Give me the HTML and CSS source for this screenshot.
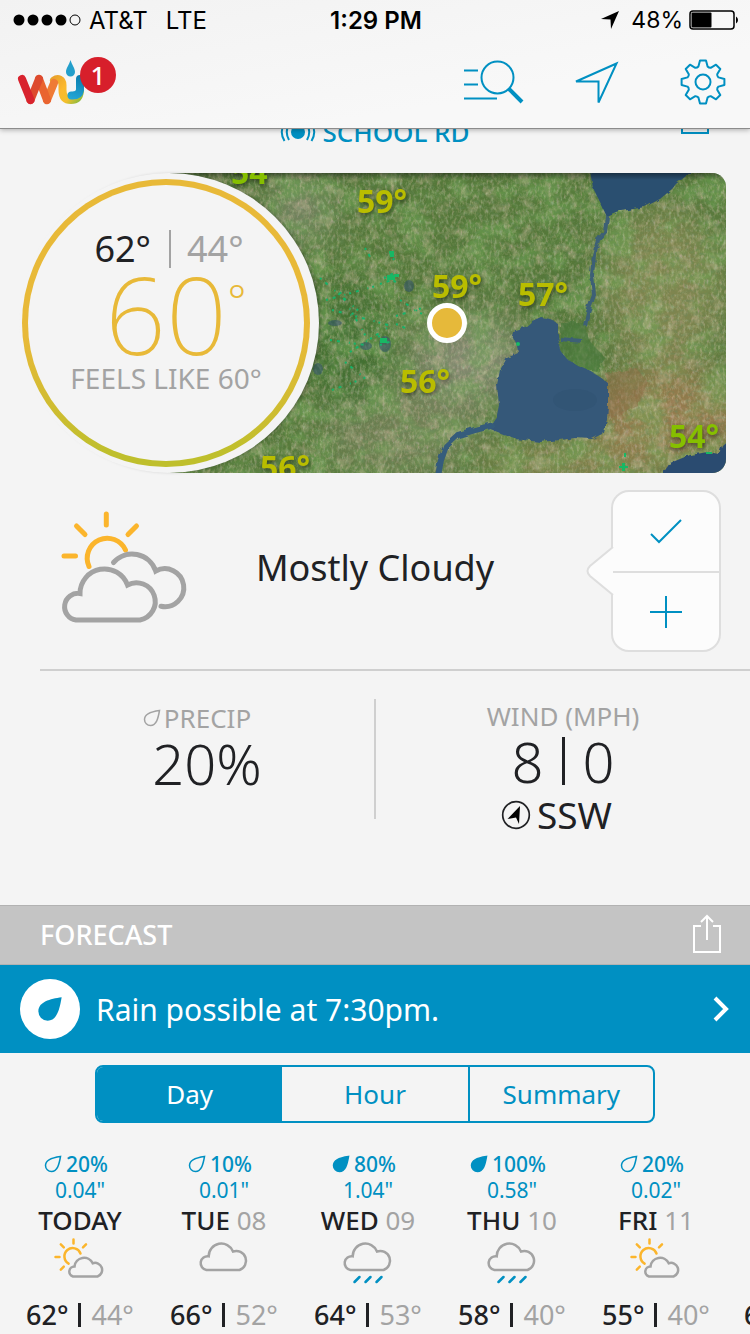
FILE: index.html
```html
<!DOCTYPE html>
<html lang="en">
<head>
<meta charset="utf-8">
<meta name="viewport" content="width=device-width, initial-scale=1">
<title>Weather</title>
<link rel="stylesheet" href="styles.css">
</head>
<body>
<svg class="symbols" aria-hidden="true">
  <symbol id="drop" viewBox="0 0 18 18"><path d="M16.5 1.5C9 2.500 1.500 4.500 1.500 10.500A6 6 0 0 0 7.500 16.500C13.500 16.500 15.200 9 16.500 1.500Z"/></symbol>
  <symbol id="partly" viewBox="0 0 52 48">
    <g class="sun"><path d="M14.600 25.600A8.300 8.300 0 1 1 26.500 15.500M19.500 1.500v4M6.800 6.300l3 3M32 6.300l-3 3M1.500 19h4M6.800 31.700l3-3"/></g>
    <path class="grey" d="M19 38.500A5.100 5.100 0 0 1 20.500 28.500A9.600 9.600 0 0 1 38.700 25.300A7 7 0 1 1 43.500 38.500Z"/>
  </symbol>
  <symbol id="overcast" viewBox="0 0 52 48"><path class="grey" d="M8.500 32A6.900 6.900 0 0 1 10.700 18.300A12.600 12.600 0 0 1 35 13.500A9.700 9.700 0 1 1 41.500 32Z"/></symbol>
  <symbol id="rain" viewBox="0 0 52 48">
    <use href="#overcast" width="52" height="48"/>
    <path class="drops" d="M12.500 44l5-5M23.500 44l5-5M34.500 44l5-5"/>
  </symbol>
  <symbol id="share" viewBox="0 0 30 40"><path d="M9 12H2V38H28V12H21M15 26V2M9 8L15 2L21 8"/></symbol>
</svg>

<header class="top">
  <div class="status">
    <div class="carrier">
      <svg width="68" height="12" viewBox="0 0 68 12"><g><circle cx="6" cy="6" r="5.500"/><circle cx="20" cy="6" r="5.500"/><circle cx="34" cy="6" r="5.500"/><circle cx="48" cy="6" r="5.500"/><circle cx="62" cy="6" r="5" fill="none" stroke="#000"/></g></svg>
      <span>AT&amp;T</span><span class="lte">LTE</span>
    </div>
    <time class="clock">1:29 PM</time>
    <div class="battery">
      <svg width="18" height="18" viewBox="0 0 18 18"><path d="M18 0L0 8L9.500 8.500L10 18Z"/></svg>
      <span>48%</span>
      <svg width="50" height="20" viewBox="0 0 50 20"><rect x="1" y="1" width="44" height="18" rx="3" fill="none" stroke="#000" stroke-width="1.500"/><rect x="2.500" y="2.500" width="20" height="15" rx="1"/><path d="M47 6.500q2 1 2 3.500t-2 3.500z"/></svg>
    </div>
  </div>
  <nav class="bar">
    <a class="logo" href="#" aria-label="Weather home">
      <svg width="68" height="50" viewBox="16 54 68 50" fill="none" stroke-width="8" stroke-linecap="round" stroke-linejoin="round">
        <defs>
          <linearGradient id="hook" x1="54" y1="74" x2="80" y2="98" gradientUnits="userSpaceOnUse"><stop offset="0" stop-color="#e9a22c"/><stop offset=".4" stop-color="#fcb92e"/><stop offset=".72" stop-color="#f3c02d"/><stop offset="1" stop-color="#8dbb3c"/></linearGradient>
          <linearGradient id="tube" x1="80" y1="72" x2="72" y2="96" gradientUnits="userSpaceOnUse"><stop offset="0" stop-color="#0a7cad"/><stop offset="1" stop-color="#23a6d6"/></linearGradient>
        </defs>
        <path d="M54 77.500C58 74.500 62.500 76.500 62.500 82V87Q62.500 97 71 97Q79 97 80 88" stroke="url(#hook)"/>
        <path d="M80 76V87Q79 93 71.500 92.500" stroke="url(#tube)"/>
        <path d="M47 97L54 80" stroke="#ef7b35"/>
        <path d="M39 76L47 97" stroke="#e96430"/>
        <path d="M30.500 97L39 76" stroke="#dd4a2e"/>
        <path d="M22 76L30.500 97" stroke="#d8232e"/>
        <path d="M70.500 57C69 62 66 65 66 69a4.500 4.500 0 0 0 9 0C75 65 72 62 70.500 57Z" fill="#239fcb"/>
      </svg>
      <span class="badge">1</span>
    </a>
    <button class="tool" aria-label="Search"><svg width="64" height="48" viewBox="463 58 64 48"><circle cx="497.500" cy="77.500" r="16"/><path d="M464 70.500h14M464 84.500h14M464 98.500h33"/><path d="M508.500 88.500L522 102" stroke-width="4"/></svg></button>
    <button class="tool" aria-label="Locate"><svg width="64" height="48" viewBox="568 58 64 48"><path d="M617.500 63.500L577 81.500H599.500V102.500Z"/></svg></button>
    <button class="tool" aria-label="Settings"><svg width="64" height="48" viewBox="-32 -24 64 48" stroke-linejoin="round"><circle r="7.500"/><path d="M-4.600-15.500L-3-21.400H3L4.600-15.500Q6-14 7.700-14.200L13-17.300L17.300-13L14.200-7.700Q14-6 15.500-4.600L21.400-3V3L15.500 4.600Q14 6 14.200 7.700L17.300 13L13 17.300L7.700 14.200Q6 14 4.600 15.500L3 21.400H-3L-4.600 15.500Q-6 14-7.700 14.200L-13 17.300L-17.300 13L-14.200 7.700Q-14 6-15.500 4.600L-21.400 3V-3L-15.500-4.600Q-14-6-14.200-7.700L-17.300-13L-13-17.300L-7.700-14.200Q-6-14-4.600-15.500Z"/></svg></button>
  </nav>
</header>

<main>
  <section class="station">
    <a class="place" href="#"><svg width="36" height="24" viewBox="0 0 36 24"><circle cx="18" cy="12" r="7" fill="#0090c2" stroke="none"/><path d="M9 4Q4.500 12 9 20M27 4Q31.500 12 27 20M4.500 3Q-1 12 4.500 21M31.500 3Q37 12 31.500 21"/></svg>SCHOOL RD</a>
    <button class="share" aria-label="Share"><svg width="30" height="40"><use href="#share"/></svg></button>
  </section>

  <section class="hero">
    <div class="dial"><div class="ring">
      <p class="hilo"><span>62°</span><span class="low">44°</span></p>
      <p class="now">60<sup>°</sup></p>
      <p class="feels">FEELS LIKE 60°</p>
    </div></div>
    <svg class="map" viewBox="168 173 558 300" preserveAspectRatio="xMidYMid slice" role="img" aria-label="Temperature map">
      <defs>
        <filter id="soft" x="-50%" y="-50%" width="200%" height="200%"><feGaussianBlur stdDeviation="18"/></filter>
        <filter id="coarse" x="0" y="0" width="100%" height="100%"><feTurbulence type="fractalNoise" baseFrequency=".03 .045" numOctaves="5" seed="4"/><feColorMatrix values="0 0 0 0 .17  0 0 0 0 .4  0 0 0 0 .1  3.600 0 0 0 -1.500"/></filter>
        <filter id="tan" x="0" y="0" width="100%" height="100%"><feTurbulence type="fractalNoise" baseFrequency=".09 .07" numOctaves="4" seed="14"/><feColorMatrix values="0 0 0 0 .62  0 0 0 0 .5  0 0 0 0 .36  0 4 0 0 -2.100"/></filter>
        <filter id="fine" x="0" y="0" width="100%" height="100%"><feTurbulence type="fractalNoise" baseFrequency=".35 .2" numOctaves="3" seed="9"/><feColorMatrix values=".6 0 0 0 .34  0 .5 0 0 .32  0 0 .4 0 .14  0 0 2.400 0 -1"/></filter>
        <filter id="dark" x="0" y="0" width="100%" height="100%"><feTurbulence type="fractalNoise" baseFrequency=".2 .3" numOctaves="2" seed="21"/><feColorMatrix values="0 0 0 0 .14  0 0 0 0 .26  0 0 0 0 .12  0 2.400 0 0 -1.100"/></filter>
        <filter id="rough" x="-5%" y="-5%" width="110%" height="110%"><feTurbulence type="fractalNoise" baseFrequency=".12" numOctaves="2" seed="2"/><feDisplacementMap in="SourceGraphic" scale="5"/></filter>
        <linearGradient id="shade" x1="0" y1="0" x2="0" y2="1"><stop offset="0" stop-color="#000" stop-opacity=".4"/><stop offset="1" stop-color="#000" stop-opacity="0"/></linearGradient>
      </defs>
      <rect x="168" y="173" width="558" height="300" fill="#55783a"/>
      <g filter="url(#soft)">
        <ellipse cx="470" cy="360" rx="58" ry="40" fill="#838870"/>
        <ellipse cx="400" cy="430" rx="80" ry="45" fill="#718055"/>
        <ellipse cx="670" cy="420" rx="80" ry="50" fill="#957a4e"/>
        <ellipse cx="570" cy="465" rx="90" ry="20" fill="#8a8450"/>
        <ellipse cx="665" cy="290" rx="60" ry="80" fill="#7f8550"/>
        <ellipse cx="300" cy="210" rx="30" ry="30" fill="#7c8669"/>
        <ellipse cx="350" cy="350" rx="40" ry="70" fill="#427031"/>
      </g>
      <rect x="168" y="173" width="558" height="300" filter="url(#coarse)" opacity=".5"/>
      <rect x="168" y="173" width="558" height="300" filter="url(#tan)" opacity=".35"/>
      <rect x="168" y="173" width="558" height="300" filter="url(#dark)" opacity=".45"/>
      <rect x="168" y="173" width="558" height="300" filter="url(#fine)" opacity=".4"/>
      <g filter="url(#rough)">
        <path d="M560 322h25l4 18 16 18-8 14-22-4-15-18z" fill="#47763a" opacity=".65"/>
        <path d="M606 374l30-6 12 14-10 24-26 12-6-4z" fill="#8f6a48" opacity=".45"/>
        <g fill="#345879">
          <path d="M589 165L593 188L600 202L607 217L622 211L645 207L660 199L672 189L676 184L700 165Z" fill="#2c4f70"/>
          <path d="M541 317L550 319L558 324L558 335L560 350L567 359L578 366L590 371L600 377L608 383V405L607 420L602 434L592 439L575 438L560 440L540 442L515 439L500 433L488 428L497 415L499 405L497 385L500 370L507 358L518 353L517 345L513 337L515 330L525 327L532 321Z"/>
          <path d="M661 476L670 463L690 455L708 452L719 454L722 445L732 436V480H661Z" fill="#2b4c70"/>
        </g>
        <path d="M607 216L605 232L598 240L594 255L592 275L594 295L588 312L585 326M560 339L582 341" fill="none" stroke="#3d6076" stroke-width="4"/>
        <path d="M494 425L475 430L458 435L446 446L441 460L438 476" fill="none" stroke="#365b7b" stroke-width="6"/>
      </g>
      <ellipse cx="575" cy="400" rx="22" ry="11" fill="#2a4b6c" opacity=".25"/>
      <g fill="#2f5068" opacity=".55"><ellipse cx="335" cy="323" rx="7" ry="3"/><ellipse cx="385" cy="344" rx="6" ry="8"/><ellipse cx="366" cy="346" rx="6" ry="4"/><ellipse cx="409" cy="286" rx="5" ry="6"/><ellipse cx="318" cy="369" rx="5" ry="6"/></g>
      <g fill="none" stroke="#16b26a" stroke-width="2" stroke-dasharray="2 5 3 9 1 4">
        <path d="M365 248l8 14M390 252l4 8M384 278l16-8M380 284l18-6M388 276l10 8M320 278l40 34M326 300l50-14M332 310l60 16M340 292l28 48M400 300l22 14M396 316l26-8M396 324l14 6M350 352l40-26M330 340l42 6M345 362l22 18M332 390l28-10M380 345l12-4M378 336l14 8"/>
      </g>
      <g fill="#18b864"><path d="M389 251h5v6h-4zM387 275h8v5h-8zM394 274h5v3h-5zM380 338h7v5h-7zM622 463h3v3h3v2h-3v3h-3v-3h-3v-2h3zM624 453h2v4h-2zM706 452h6v2h-6z"/><circle cx="518" cy="344" r="2"/></g>
      <rect x="168" y="173" width="558" height="7" fill="url(#shade)"/>
      <g class="temps-on-map">
        <text class="cool" x="231" y="184">54°</text><text x="357" y="213">59°</text><text x="432" y="298">59°</text><text x="518" y="306">57°</text><text x="400" y="393">56°</text><text class="cool" x="669" y="448">54°</text><text x="260" y="479">56°</text>
      </g>
      <circle cx="447" cy="323" r="17.500" fill="#e6b93a" stroke="#fff" stroke-width="5"/>
    </svg>
  </section>

  <section class="condition">
    <svg class="condition-icon" width="128" height="116" viewBox="60 509 128 116">
      <path class="sun" d="M89 566.500A20 20 0 1 1 125.500 550M106.300 514v11M76.500 526l8.500 8.500M136.500 526l-8.500 8.500M64 556h11.500"/>
      <path class="grey" d="M113.500 562.500A24.800 24.800 0 0 1 155.700 571A19 19 0 1 1 161 606.300M76 620A13.400 13.400 0 0 1 80 593.500A24.500 24.500 0 0 1 127.500 585A18.800 18.800 0 1 1 140 620Z"/>
    </svg>
    <h1>Mostly Cloudy</h1>
    <div class="report">
      <svg class="pointer" width="28" height="52" viewBox="0 0 28 52"><path d="M27 2L4 21Q-1 26 4 31L27 50" fill="#fcfcfc" stroke="#dedede" stroke-width="2"/></svg>
      <button aria-label="Confirm conditions"><svg width="32" height="26"><path d="M1 15L9 23L31 1"/></svg></button>
      <button aria-label="Report conditions"><svg width="32" height="32"><path d="M0 16H32M16 0V32"/></svg></button>
    </div>
  </section>

  <section class="metrics">
    <div class="metric precip">
      <h2><svg width="18" height="18"><use href="#drop"/></svg>PRECIP</h2>
      <p class="value">20%</p>
    </div>
    <div class="divider"></div>
    <div class="metric">
      <h2>WIND (MPH)</h2>
      <p class="value">8<i></i>0</p>
      <p class="direction"><svg width="30" height="30" viewBox="0 0 30 30"><circle cx="15" cy="15" r="13.300" fill="none" stroke="#202124" stroke-width="1.700"/><path d="M19 6L6.500 19L15 17.500L18 24Z"/></svg>SSW</p>
    </div>
  </section>

  <section class="forecast">
    <div class="forecast-head"><h2>FORECAST</h2><button class="share" aria-label="Share forecast"><svg width="30" height="40"><use href="#share"/></svg></button></div>
    <a class="alert" href="#">
      <span class="disc"><svg width="28" height="28"><use href="#drop"/></svg></span>
      <span class="message">Rain possible at 7:30pm.</span>
      <svg width="16" height="26" viewBox="0 0 16 26"><path d="M2 2L13 13L2 24" fill="none" stroke="#fff" stroke-width="4"/></svg>
    </a>
    <div class="tabs"><button class="active" aria-pressed="true">Day</button><button>Hour</button><button>Summary</button></div>
    <ol class="days">
      <li><p class="chance"><svg width="18" height="18"><use href="#drop"/></svg>20%</p><p class="amount">0.04"</p><h3>TODAY</h3><svg class="sky" width="52" height="48"><use href="#partly"/></svg><p class="range">62°<i></i><span>44°</span></p></li>
      <li><p class="chance"><svg width="18" height="18"><use href="#drop"/></svg>10%</p><p class="amount">0.01"</p><h3>TUE <span>08</span></h3><svg class="sky" width="52" height="48"><use href="#overcast"/></svg><p class="range">66°<i></i><span>52°</span></p></li>
      <li><p class="chance wet"><svg width="18" height="18"><use href="#drop"/></svg>80%</p><p class="amount">1.04"</p><h3>WED <span>09</span></h3><svg class="sky" width="52" height="48"><use href="#rain"/></svg><p class="range">64°<i></i><span>53°</span></p></li>
      <li><p class="chance wet"><svg width="18" height="18"><use href="#drop"/></svg>100%</p><p class="amount">0.58"</p><h3>THU <span>10</span></h3><svg class="sky" width="52" height="48"><use href="#rain"/></svg><p class="range">58°<i></i><span>40°</span></p></li>
      <li><p class="chance"><svg width="18" height="18"><use href="#drop"/></svg>20%</p><p class="amount">0.02"</p><h3>FRI <span>11</span></h3><svg class="sky" width="52" height="48"><use href="#partly"/></svg><p class="range">55°<i></i><span>40°</span></p></li>
      <li class="next"><p class="range">6</p></li>
    </ol>
  </section>
</main>
</body>
</html>
```
FILE: styles.css
```css
:root { --blue: #0090c2; --grey: #a3a3a3; --ink: #202124; --paper: #f4f4f4; }
* { box-sizing: border-box; }
body { margin: 0; background: var(--paper); color: var(--ink); font-family: "Noto Sans", "Open Sans", sans-serif; overflow-x: hidden; }
h1, h2, h3, p, ol { margin: 0; padding: 0; font-weight: 400; }
button { margin: 0; padding: 0; border: 0; background: none; font: inherit; color: inherit; }
a { color: inherit; text-decoration: none; }
svg { display: block; flex: none; }
.symbols { position: absolute; width: 0; height: 0; }
.sun { fill: none; stroke: #fbb52c; }
.grey { fill: none; stroke: var(--grey); }
.drops { fill: none; stroke: var(--blue); }

.top { position: sticky; top: 0; z-index: 5; background: linear-gradient(170deg, #f2f2f2, #f8f8f8 70%); border-bottom: 1px solid #8c8c8c; box-shadow: 0 1px 5px rgba(0, 0, 0, .3); }
.status { display: grid; grid-template-columns: 1fr auto 1fr; align-items: center; height: 40px; padding: 0 11px 0 13px; font-family: Inter, "Liberation Sans", sans-serif; font-size: 24px; color: #000; }
.carrier, .battery { display: flex; align-items: center; gap: 8px; }
.lte { margin-left: 10px; }
.clock { font-weight: 600; }
.battery { justify-content: flex-end; gap: 6px; }
.battery span { margin-left: 6px; font-size: 23px; }
.bar { display: flex; align-items: center; gap: 40px; height: 88px; padding: 0 15px 4px 16px; }
.logo { display: flex; align-items: flex-start; margin-right: auto; }
.badge { width: 36px; height: 36px; margin-left: -4px; z-index: 1; border-radius: 50%; background: #d71f2b; color: #fff; font-size: 26px; font-weight: 500; line-height: 36px; text-align: center; }
.tool svg { fill: none; stroke: var(--blue); stroke-width: 2; }

.station { display: grid; grid-template-columns: 1fr auto; align-items: end; margin-top: -34px; height: 78px; padding: 0 40px 26px; color: var(--blue); }
.place { display: flex; justify-content: center; align-items: center; gap: 6px; height: 36px; padding-left: 30px; font-size: 26px; font-weight: 500; }
.place svg, .share svg { fill: none; stroke: currentColor; stroke-width: 2; }
.station .share { padding-bottom: 15px; }

.hero { display: grid; padding: 0 24px 0 19px; }
.dial { grid-area: 1 / 1; z-index: 1; width: 300px; height: 300px; padding: 6px 3px; border-radius: 50%; background: var(--paper); box-shadow: 3px 0 4px -2px rgba(0, 0, 0, .4); }
.ring { height: 288px; width: 288px; padding-top: 45px; border: 6px solid transparent; border-radius: 50%; background: linear-gradient(var(--paper), var(--paper)) padding-box, linear-gradient(#e8b938 55%, #bfbf2c 95%) border-box; text-align: center; }
.hilo { display: grid; grid-template-columns: 1fr 1fr; padding-left: 6px; font-size: 36px; line-height: 38px; }
.hilo span { padding-right: 18px; text-align: right; }
.hilo .low { padding: 0 0 0 16px; border-left: 2px solid var(--grey); color: var(--grey); text-align: left; }
.now { padding-left: 20px; color: #e8b938; font-size: 107px; font-weight: 200; line-height: 92px; }
.now sup { display: inline-block; width: 20px; font-size: 44px; font-weight: 300; line-height: 44px; vertical-align: 38px; }
.feels { color: var(--grey); font-size: 28px; line-height: 36px; }
.map { grid-area: 1 / 1; justify-self: stretch; width: calc(100% - 149px); height: 300px; margin-left: 149px; border-radius: 0 14px 14px 0; }
.temps-on-map { font-size: 32px; font-weight: 700; fill: #b9bd00; filter: drop-shadow(1px 2px 2px rgba(0, 0, 0, .5)); }
.temps-on-map .cool { fill: #86bf00; }

.condition { display: grid; grid-template-columns: 1fr auto 1fr; align-items: center; height: 198px; margin-left: 40px; padding: 0 29px 0 20px; border-bottom: 2px solid #cfcfcf; }
.condition-icon { margin-bottom: 8px; stroke-width: 5; stroke-linecap: round; }
.condition h1 { margin: 0 31px 8px 0; font-size: 36px; }
.report { position: relative; justify-self: end; display: grid; grid-template-rows: 1fr 1fr; width: 110px; height: 162px; border: 2px solid #dedede; border-radius: 18px; background: #fcfcfc; }
.report button { display: grid; place-items: center; }
.report button + button { border-top: 2px solid #dedede; }
.report button svg { fill: none; stroke: var(--blue); stroke-width: 2; }
.pointer { position: absolute; left: -27px; top: 53px; }

.metrics { display: grid; grid-template-columns: 1fr 2px 1fr; align-items: start; padding: 28px 0 66px; text-align: center; }
.divider { height: 120px; background: #cfcfcf; }
.metric { padding-top: 2px; }
.metric.precip { padding: 4px 0 0 40px; }
.metric h2 { display: flex; justify-content: center; align-items: center; gap: 3px; color: var(--grey); font-size: 26px; line-height: 30px; }
.precip h2 { padding-right: 20px; }
.precip h2 svg, .chance svg { fill: none; stroke: currentColor; stroke-width: 1.5; }
.value { display: flex; justify-content: center; align-items: center; font-size: 56px; font-weight: 300; line-height: 60px; }
.value i { width: 3px; height: 48px; margin: 0 18px; background: var(--ink); }
.direction { display: flex; justify-content: center; align-items: center; gap: 6px; padding-right: 13px; font-size: 37px; line-height: 48px; }

.forecast-head { display: flex; justify-content: space-between; align-items: center; height: 60px; padding: 0 28px 2px 40px; border: solid #b2b2b2; border-width: 1px 0; background: #c4c4c4; color: #fff; }
.forecast-head h2 { font-size: 27px; font-weight: 500; }
.alert { display: flex; align-items: center; gap: 16px; height: 88px; padding: 0 21px 0 20px; background: var(--blue); color: #fff; font-size: 30px; }
.disc { display: grid; place-items: center; width: 60px; height: 60px; border-radius: 50%; background: #fff; color: var(--blue); }
.disc svg { fill: currentColor; }
.message { flex: 1; }
.tabs { display: grid; grid-template-columns: 1fr 1fr 1fr; height: 58px; margin: 12px 95px 0; border: 2px solid var(--blue); border-radius: 8px; overflow: hidden; color: var(--blue); font-size: 26px; }
.tabs button + button + button { border-left: 2px solid var(--blue); }
.tabs .active { background: var(--blue); color: #fff; }
.days { display: flex; margin-top: 28px; padding-left: 8px; list-style: none; overflow: hidden; text-align: center; }
.days li { flex: 0 0 144px; display: flex; flex-direction: column; align-items: center; }
.chance { display: flex; align-items: center; gap: 4px; padding-right: 8px; color: var(--blue); font-size: 21px; font-weight: 500; line-height: 26px; }
.chance.wet svg { fill: currentColor; }
.amount { color: var(--blue); font-size: 21px; line-height: 26px; }
.days h3 { font-size: 26px; font-weight: 500; line-height: 34px; }
.days span { color: var(--grey); font-weight: 400; }
.sky { margin-top: 1px; stroke-width: 2.5; stroke-linecap: round; }
.range { display: flex; align-items: center; margin-top: 13px; font-size: 27px; font-weight: 500; line-height: 32px; }
.range i { width: 3px; height: 24px; margin: 0 10px; background: var(--ink); }
.days .next { align-items: flex-start; justify-content: flex-end; padding-left: 16px; }
```
